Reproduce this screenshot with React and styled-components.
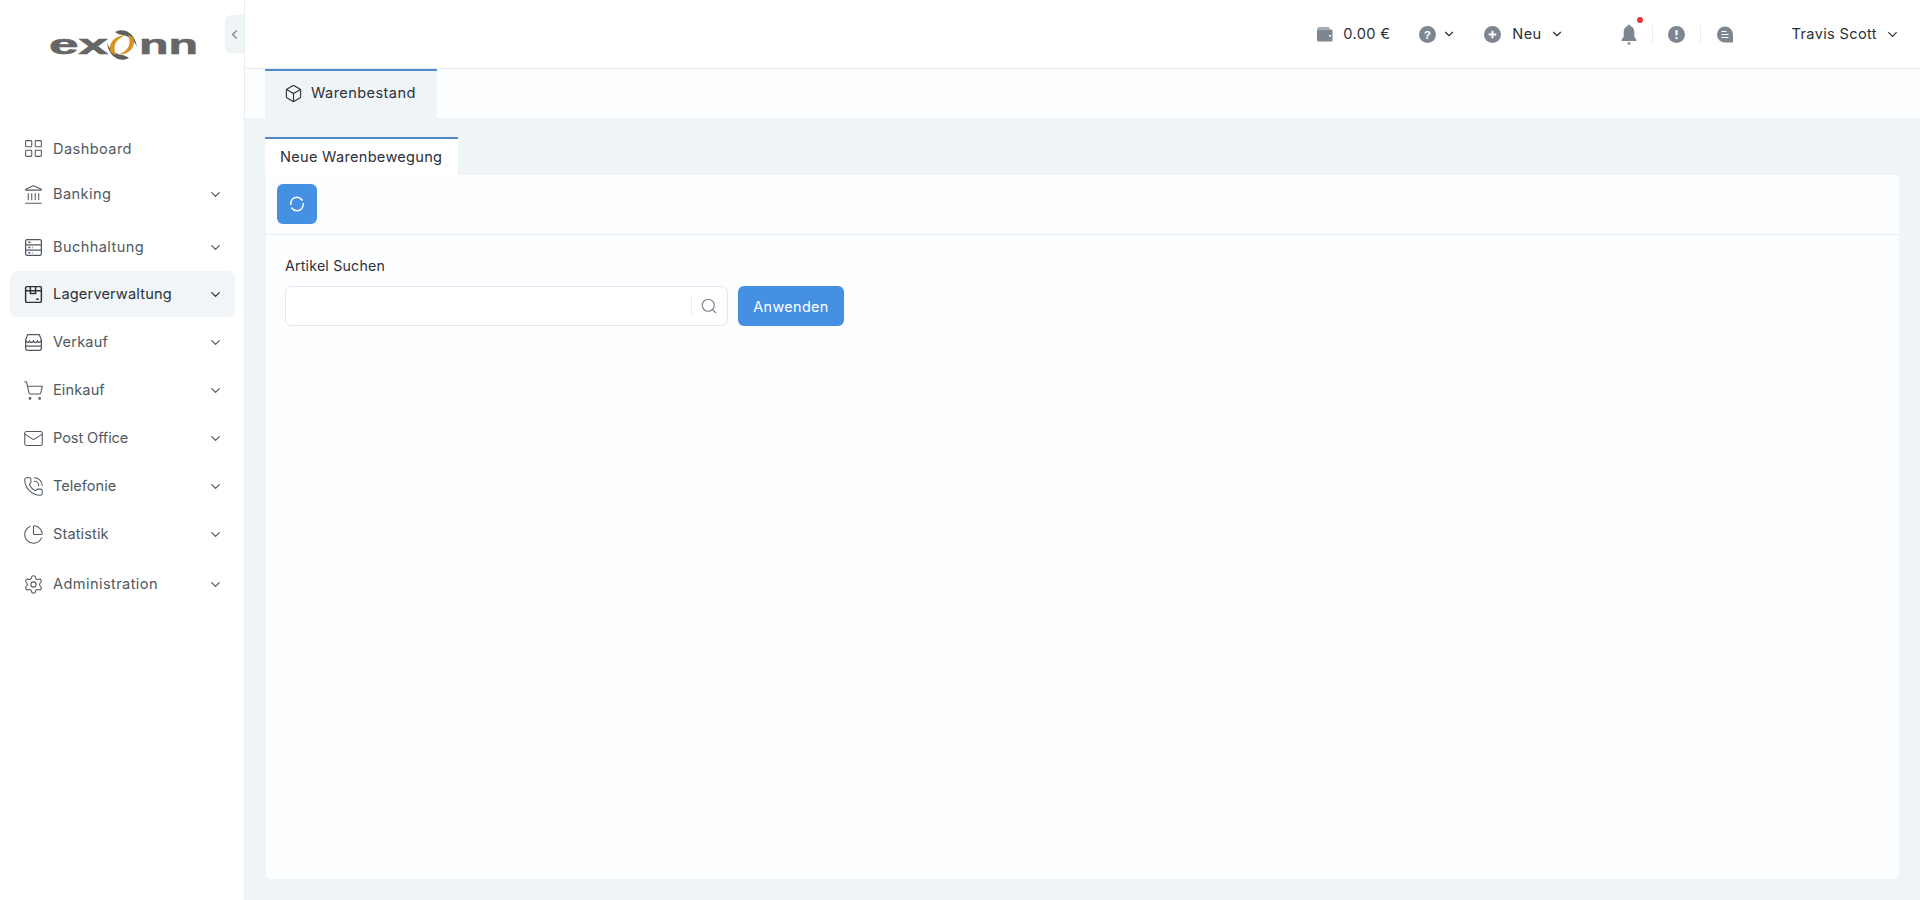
import React from "react";
import styled, { createGlobalStyle } from "styled-components";
import {
  Box,
  ChevronDown,
  ChevronLeft,
  LayoutGrid,
  Landmark,
  Mail,
  PhoneCall,
  PieChart,
  Search,
  Settings,
  ShoppingCart,
} from "lucide-react";

const GREY = "#7e8791";
const TEXT = "#3f4650";
const BLUE = "#4590e3";

const GlobalStyle = createGlobalStyle`
  html, body {
    margin: 0;
    padding: 0;
    height: 100%;
    background: #eff4f7;
  }
  body {
    font-family: "Inter", "Noto Sans", sans-serif;
    color: ${TEXT};
  }
  * { box-sizing: border-box; }
`;

const Shell = styled.div`
  display: flex;
  width: 100%;
  height: 900px;
  overflow: hidden;
`;
const Sidebar = styled.aside`
  position: relative;
  flex: 0 0 245px;
  height: 100%;
  background: #fff;
  border-right: 1px solid #e8edf1;
  padding: 0 9px 0 10px;
`;
const LogoBox = styled.div`
  display: flex;
  justify-content: center;
  height: 126px;
  padding: 26px 0 0 0;
  svg {
    overflow: visible;
  }
`;
const Collapse = styled.div`
  position: absolute;
  top: 15px;
  right: 0;
  width: 19px;
  height: 38px;
  display: flex;
  align-items: center;
  justify-content: center;
  color: ${GREY};
  background: #eff4f7;
  border-radius: 6px 0 0 6px;
`;
const Menu = styled.nav`
  display: flex;
  flex-direction: column;
`;
const MenuItem = styled.div`
  display: flex;
  align-items: center;
  height: ${(props) => props.$height || 46}px;
  margin-top: ${(props) => props.$top ?? 2}px;
  padding: 0 12px 0 13px;
  border-radius: 8px;
  background: ${(props) => (props.$active ? "#f1f5f8" : "transparent")};
  color: ${(props) => (props.$active ? "#2b3139" : "#505963")};
  font-size: 14.6px;
  font-weight: 400;
  letter-spacing: ${(props) => props.$spacing ?? 0.4}px;
  svg.lead {
    width: 21px;
    height: 21px;
    flex: none;
    margin-right: 9px;
  }
`;
const MenuLabel = styled.span`
  flex: 1;
`;
const Main = styled.main`
  flex: 1;
  display: flex;
  flex-direction: column;
  min-width: 0;
`;
const Topbar = styled.header`
  display: flex;
  align-items: center;
  justify-content: flex-end;
  height: 69px;
  padding-right: 20px;
  background: #fff;
  border-bottom: 1px solid #e8edf1;
`;
const TopItem = styled.div`
  display: flex;
  align-items: center;
  margin-left: ${(props) => props.$left || 0}px;
  color: #2b3139;
  font-size: 14.6px;
  font-weight: 400;
  letter-spacing: 0.35px;
`;
const TopText = styled.span`
  margin: 0 ${(props) => props.$right || 0}px 0 ${(props) => props.$left || 0}px;
`;
const TopChevron = styled(ChevronDown)`
  margin-left: ${(props) => props.$left || 0}px;
`;
const TopDivider = styled.span`
  width: 1px;
  height: 18px;
  background: #e8edf1;
  margin-left: ${(props) => props.$left}px;
`;
const BellWrap = styled.span`
  position: relative;
  display: flex;
`;
const RedDot = styled.span`
  position: absolute;
  top: -7px;
  right: -6px;
  width: 6px;
  height: 6px;
  border-radius: 50%;
  background: #e5383b;
`;
const TabBar = styled.div`
  display: flex;
  height: 49px;
  padding-left: 20px;
  background: #fdfeff;
`;
const PageTab = styled.div`
  display: flex;
  align-items: flex-start;
  width: 172px;
  height: 49px;
  padding: 13px 0 0 19px;
  background: #eff4f7;
  border-top: 2px solid #4d8ac9;
  color: #2b3139;
  font-size: 14.6px;
  font-weight: 400;
  letter-spacing: 0.4px;
  svg {
    width: 19px;
    height: 19px;
    margin: 0 8px 0 0;
    flex: none;
  }
`;
const Content = styled.div`
  flex: 1;
  display: flex;
  flex-direction: column;
  padding: 19px 20px 20px 20px;
  background: #eff4f7;
`;
const SubTabs = styled.div`
  display: flex;
`;
const SubTab = styled.div`
  display: flex;
  align-items: center;
  height: 38px;
  padding: 0 15px;
  width: 193px;
  white-space: nowrap;
  background: #fff;
  border-top: 2px solid #4d8ac9;
  color: #2b3139;
  font-size: 14.6px;
  font-weight: 400;
  letter-spacing: 0.27px;
`;
const Card = styled.section`
  flex: 1;
  background: #fdfeff;
  border-radius: 0 0 6px 6px;
  border: 1px solid #f0f3f6;
  border-top: none;
`;
const Toolbar = styled.div`
  display: flex;
  height: 60px;
  padding: 9px 0 0 11px;
  border-bottom: 1px solid #e9edf1;
`;
const IconButton = styled.button`
  display: flex;
  align-items: center;
  justify-content: center;
  width: 40px;
  height: 40px;
  padding: 0;
  border: none;
  border-radius: 6px;
  background: ${BLUE};
  color: #fff;
`;
const Form = styled.div`
  padding: 22px 19px;
`;
const Label = styled.div`
  height: 29px;
  font-size: 14.2px;
  font-weight: 400;
  letter-spacing: 0.2px;
  line-height: 17px;
  color: #2b3139;
`;
const Row = styled.div`
  display: flex;
  gap: 10px;
`;
const SearchBox = styled.div`
  display: flex;
  align-items: center;
  width: 443px;
  height: 40px;
  padding-right: 9px;
  background: #fff;
  border: 1px solid #e4e8ee;
  border-radius: 6px;
  color: ${GREY};
`;
const SearchInput = styled.input`
  flex: 1;
  min-width: 0;
  height: 100%;
  border: none;
  outline: none;
  background: transparent;
  font: inherit;
`;
const SearchDivider = styled.span`
  width: 1px;
  height: 20px;
  margin-right: 8px;
  background: #e8ebef;
`;
const ApplyButton = styled.button`
  width: 106px;
  height: 40px;
  border: none;
  border-radius: 6px;
  background: ${BLUE};
  color: #fff;
  font-family: inherit;
  font-size: 14.4px;
  font-weight: 400;
  letter-spacing: 0.35px;
`;

const Logo = () => (
  <svg width="146" height="36" viewBox="0 0 146 36">
    <text x="-1" y="28" fontFamily="Liberation Sans" fontWeight="700" fontSize="28" fill="#666" stroke="#666" strokeWidth=".6" textLength="59" lengthAdjust="spacingAndGlyphs">ex</text>
    <text x="89" y="28" fontFamily="Liberation Sans" fontWeight="700" fontSize="28" fill="#666" stroke="#666" strokeWidth=".6" textLength="59" lengthAdjust="spacingAndGlyphs">nn</text>
    <g transform="translate(72 19)">
      <path d="M-7 -13 C2 -18 13 -12 15 2 C12 -5 7 -9 0 -10 C-3 -10.5 -5 -11.5 -7 -13Z" fill="#5f5f5f" />
      <path d="M-7 -13 C2 -18 13 -12 15 2 C12 -5 7 -9 0 -10 C-3 -10.5 -5 -11.5 -7 -13Z" fill="#5f5f5f" transform="rotate(180)" />
      <path d="M-12 5 C-13 -3 -6 -10 3 -9.5 C-3 -7 -7.5 -3 -7.5 3 C-7.5 6 -7 8 -6 10 C-9 9 -11.5 7.5 -12 5Z" fill="#d8921e" />
      <path d="M-12 5 C-13 -3 -6 -10 3 -9.5 C-3 -7 -7.5 -3 -7.5 3 C-7.5 6 -7 8 -6 10 C-9 9 -11.5 7.5 -12 5Z" fill="#d8921e" transform="rotate(180)" />
    </g>
  </svg>
);

const BookIcon = (props) => (
  <svg className="lead" viewBox="-1 -1 20 20" fill="none" stroke="currentColor" strokeWidth="1.2" {...props}>
    <rect x="1.5" y="1.5" width="15" height="15" rx="1.5" />
    <path d="M1.5 6.5h15M1.5 11.5h15M4 4h2M4 9h2M4 14h2M8 9h.5M8 14h.5" />
  </svg>
);
const CrateIcon = (props) => (
  <svg className="lead" viewBox="-1 -1 20 20" fill="none" stroke="currentColor" strokeWidth="1.4" {...props}>
    <rect x="1.5" y="1.5" width="15" height="15" rx="1" />
    <path d="M1.5 5.5h15M6 1.5v6.5h5V1.5M11.5 13.5h2.5" />
  </svg>
);
const ShopIcon = (props) => (
  <svg className="lead" viewBox="-1 -1 20 20" fill="none" stroke="currentColor" strokeWidth="1.2" {...props}>
    <path d="M3.5 1.5h11l2 5v8a2 2 0 0 1-2 2h-11a2 2 0 0 1-2-2v-8z" />
    <path d="M1.5 7c1.5 2.5 3 2.5 3.8 0.5 1 2 2.6 2 3.7 0 1 2 2.7 2 3.7 0 .8 2 2.3 2 3.8-.5M1.5 12.5h15" />
  </svg>
);
const WalletIcon = () => (
  <svg width="17" height="16" viewBox="0 0 17 16">
    <path d="M1 3.5C1 2 2 1 3.5 1H13l1 2.5H1z" fill="#a4abb3" />
    <path d="M1 3.5h14.5a1 1 0 0 1 1 1V14a1.5 1.5 0 0 1-1.5 1.5H2.5A1.5 1.5 0 0 1 1 14z" fill={GREY} />
    <rect x="13" y="9" width="2" height="1.6" fill="#fff" />
  </svg>
);
const Circle = ({ children }) => (
  <svg width="17" height="17" viewBox="0 0 16 16">
    <circle cx="8" cy="8" r="8" fill={GREY} />
    {children}
  </svg>
);
const BellIcon = () => (
  <svg width="16" height="21" viewBox="0 0 16 21">
    <path d="M8 0.5a1.4 1.4 0 0 1 1.4 1.6C12 3 13.3 5.3 13.3 8v4.5L15.5 16v1H.5v-1l2.2-3.5V8c0-2.7 1.3-5 3.9-5.9A1.4 1.4 0 0 1 8 .5z" fill={GREY} />
    <circle cx="8" cy="19.3" r="1.6" fill="#9aa1a9" />
  </svg>
);
const NoteIcon = () => (
  <svg width="16" height="17" viewBox="0 0 16 17">
    <path d="M8 .5a8 8 0 0 1 8 8V16.5H8a8 8 0 0 1-8-8 8 8 0 0 1 8-8z" fill={GREY} />
    <path d="M4.5 5.5h5M4.5 8.5h7M4.5 11.5h7" stroke="#fff" strokeWidth="1.2" />
  </svg>
);
const SyncIcon = () => (
  <svg width="16" height="16" viewBox="0 0 16 16" fill="none" stroke="#fff" strokeWidth="1.5">
    <path d="M3 3.6A6.2 6.2 0 0 1 12.7 3.8M14.1 7a6.2 6.2 0 0 1-1.2 5.2M13 12.4a6.2 6.2 0 0 1-9.8.1M1.9 9A6.2 6.2 0 0 1 3 3.6" />
    <circle cx="13" cy="3.9" r=".9" fill="#fff" stroke="none" />
    <circle cx="3" cy="12.2" r=".9" fill="#fff" stroke="none" />
  </svg>
);

const items = [
  { label: "Dashboard", icon: <LayoutGrid className="lead" strokeWidth={1.2} />, noArrow: true, top: 0, height: 45 },
  { label: "Banking", icon: <Landmark className="lead" strokeWidth={1.2} />, top: 0 },
  { label: "Buchhaltung", icon: <BookIcon />, top: 7 },
  { label: "Lagerverwaltung", icon: <CrateIcon />, active: true, top: 1, spacing: 0.15 },
  { label: "Verkauf", icon: <ShopIcon />, spacing: 0.2 },
  { label: "Einkauf", icon: <ShoppingCart className="lead" strokeWidth={1.2} />, spacing: 0.1 },
  { label: "Post Office", icon: <Mail className="lead" strokeWidth={1.2} />, spacing: -0.1 },
  { label: "Telefonie", icon: <PhoneCall className="lead" strokeWidth={1.2} />, spacing: 0 },
  { label: "Statistik", icon: <PieChart className="lead" strokeWidth={1.2} />, spacing: 0.1 },
  { label: "Administration", icon: <Settings className="lead" strokeWidth={1.2} />, top: 4 },
];

const App = () => {
  return (
    <Shell>
      <GlobalStyle />
      <Sidebar>
        <LogoBox>
          <Logo />
        </LogoBox>
        <Collapse>
          <ChevronLeft size={15} />
        </Collapse>
        <Menu>
          {items.map((item) => (
            <MenuItem
              key={item.label}
              $active={item.active}
              $top={item.top}
              $height={item.height}
              $spacing={item.spacing}
            >
              {item.icon}
              <MenuLabel>{item.label}</MenuLabel>
              {item.noArrow ? null : <ChevronDown size={15} />}
            </MenuItem>
          ))}
        </Menu>
      </Sidebar>
      <Main>
        <Topbar>
          <TopItem>
            <WalletIcon />
            <TopText $left={10}>0.00 €</TopText>
          </TopItem>
          <TopItem $left={29}>
            <Circle>
              <text x="8" y="12" textAnchor="middle" fontSize="11" fontWeight="700" fill="#fff" fontFamily="Liberation Sans">?</text>
            </Circle>
            <TopChevron size={14} $left={6} />
          </TopItem>
          <TopItem $left={28}>
            <Circle>
              <path d="M8 4.5v7M4.5 8h7" stroke="#fff" strokeWidth="1.8" />
            </Circle>
            <TopText $left={11} $right={8}>Neu</TopText>
            <ChevronDown size={14} />
          </TopItem>
          <TopItem $left={57}>
            <BellWrap>
              <BellIcon />
              <RedDot />
            </BellWrap>
          </TopItem>
          <TopDivider $left={15} />
          <TopItem $left={15}>
            <Circle>
              <path d="M8 3.8v5" stroke="#fff" strokeWidth="2" />
              <circle cx="8" cy="11.4" r="1.1" fill="#fff" />
            </Circle>
          </TopItem>
          <TopDivider $left={15} />
          <TopItem $left={16}>
            <NoteIcon />
          </TopItem>
          <TopItem $left={59}>
            <TopText $right={8}>Travis Scott</TopText>
            <ChevronDown size={15} />
          </TopItem>
        </Topbar>
        <TabBar>
          <PageTab>
            <Box strokeWidth={1.4} />
            Warenbestand
          </PageTab>
        </TabBar>
        <Content>
          <SubTabs>
            <SubTab>Neue Warenbewegung</SubTab>
          </SubTabs>
          <Card>
            <Toolbar>
              <IconButton>
                <SyncIcon />
              </IconButton>
            </Toolbar>
            <Form>
              <Label>Artikel Suchen</Label>
              <Row>
                <SearchBox>
                  <SearchInput />
                  <SearchDivider />
                  <Search size={18} strokeWidth={1.5} />
                </SearchBox>
                <ApplyButton>Anwenden</ApplyButton>
              </Row>
            </Form>
          </Card>
        </Content>
      </Main>
    </Shell>
  );
};

export default App;
